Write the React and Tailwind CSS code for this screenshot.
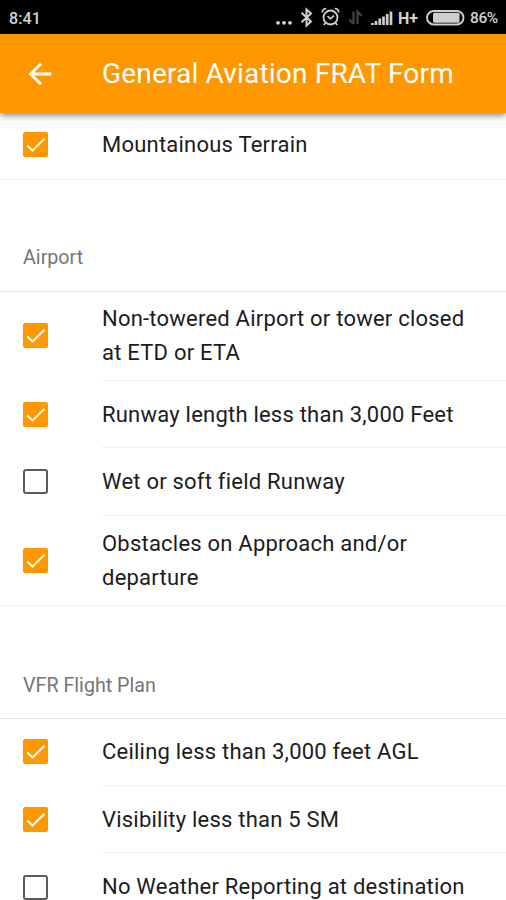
import React, { useState } from 'react';

const sections = [
  {
    id: 'terrain',
    rows: [
      { id: 'mountain', label: 'Mountainous Terrain', checked: true, size: 'h-[66px] pb-[2px]', box: 'pb-[3px]' },
    ],
  },
  {
    id: 'airport',
    title: 'Airport',
    rows: [
      { id: 'tower', label: 'Non-towered Airport or tower closed at ETD or ETA', checked: true, size: 'h-[88px]', box: 'pb-[2px]' },
      { id: 'length', label: 'Runway length less than 3,000 Feet', checked: true, size: 'h-[66px] pt-px', box: '' },
      { id: 'wet', label: 'Wet or soft field Runway', checked: false, size: 'h-[67px] pt-px', box: 'pb-px' },
      { id: 'obstacles', label: 'Obstacles on Approach and/or departure', checked: true, size: 'h-[89px] pt-px', box: 'pb-px' },
    ],
  },
  {
    id: 'vfr',
    title: 'VFR Flight Plan',
    rows: [
      { id: 'ceiling', label: 'Ceiling less than 3,000 feet AGL', checked: true, size: 'h-[66px]', box: 'pb-[2px]' },
      { id: 'visibility', label: 'Visibility less than 5 SM', checked: true, size: 'h-[66px] pt-px', box: '' },
      { id: 'weather', label: 'No Weather Reporting at destination', checked: false, size: 'h-[67px]', box: 'pt-px' },
    ],
  },
];

function StatusBar() {
  return (
    <div className="flex h-[34px] shrink-0 items-center bg-black pl-[9px] pr-[8px] pt-[2px] text-[#d4d4d4]">
      <span className="w-[60px] pt-[2px] text-[16px] font-medium leading-none tracking-[0.1px]">8:41</span>
      <svg width="200" height="32" viewBox="0 0 200 32" className="ml-auto block" fill="none" stroke="#cfcfcf">
        <g fill="#d4d4d4" stroke="none">
          <circle cx="8" cy="20.8" r="1.9" />
          <circle cx="14" cy="20.8" r="1.9" />
          <circle cx="20" cy="20.8" r="1.9" />
        </g>
        <path d="M31.5 10.8 L41 19.5 L36.5 23.5 V7.5 L41 11.5 L31.5 20.2" strokeWidth="2" />
        <circle cx="60.5" cy="15.5" r="7" strokeWidth="1.8" />
        <path d="M57.5 14 l3 2.8 l3.5 -3.3 M52.3 10.5 a4 4 0 0 1 4 -4 M68.7 10.5 a4 4 0 0 0 -4 -4 M55.5 21 l-1.8 2 M65.5 21 l1.8 2" strokeWidth="1.7" />
        <path d="M83.5 9.5 V22 M79.3 17.5 L83.5 22 M87.5 22 V9.5 L91.7 14" stroke="#444" strokeWidth="2.2" />
        <path d="M102.5 23 v-2 M106 23 v-4 M109.8 23 v-6.5 M113.5 23 v-8.5 M117.2 23 v-11 M121 23 v-13.5" strokeWidth="2.7" />
        <rect x="157" y="9" width="36.5" height="13.5" rx="6.7" strokeWidth="1.9" />
        <rect x="163" y="10.8" width="26.5" height="9.9" rx="1.5" fill="#cfcfcf" stroke="none" />
        <text x="128" y="21.5" fill="#d4d4d4" stroke="none" fontSize="16" fontWeight="700" textLength="20" lengthAdjust="spacingAndGlyphs">H+</text>
      </svg>
      <span className="w-[28px] whitespace-nowrap pt-[2px] text-[15.5px] font-medium leading-none tracking-[-0.4px]">86%</span>
    </div>
  );
}

function Checkbox({ checked, onChange }) {
  return (
    <button
      type="button"
      role="checkbox"
      aria-checked={checked}
      onClick={onChange}
      className={
        checked
          ? 'ml-[23px] h-[25px] w-[25px] shrink-0 rounded-[2px] bg-[#ff9800]'
          : 'ml-[23px] h-[25px] w-[25px] shrink-0 rounded-[3px] border-2 border-[#5c5c5c] bg-white'
      }
    >
      {checked && (
        <svg viewBox="0 0 25 25" className="block h-full w-full" fill="none" stroke="#fff6e8" strokeWidth="2.2">
          <path d="M4.2 13.4 L9.5 18.5 L21.5 6.8" />
        </svg>
      )}
    </button>
  );
}

function Row({ row, last, checked, onToggle }) {
  return (
    <li className={last ? 'flex items-stretch border-b border-[#f1f1f1]' : 'flex items-stretch'}>
      <div className={`${row.box} flex w-[102px] shrink-0 items-center`}>
        <Checkbox checked={checked} onChange={onToggle} />
      </div>
      <div className={last ? 'flex-1' : 'flex-1 border-b border-[#efefef]'}>
        <div className={`${row.size} flex items-center pr-[30px]`}>
          <span className="text-[22px] leading-[34px] tracking-[0.22px] text-[#1c1c1c]">{row.label}</span>
        </div>
      </div>
    </li>
  );
}

export default function App() {
  const [marked, setMarked] = useState(() =>
    Object.fromEntries(sections.flatMap(s => s.rows).map(r => [r.id, r.checked]))
  );

  return (
    <div className="flex h-[900px] w-[506px] flex-col overflow-hidden bg-white font-['Roboto',sans-serif]">
      <StatusBar />
      <header className="relative z-10 flex h-[79px] shrink-0 items-center bg-[#ff9800] text-white shadow-[0_3px_6px_rgba(0,0,0,0.42)]">
        <button type="button" aria-label="Back" className="ml-[23px] w-[79px]">
          <svg width="34" height="34" viewBox="0 0 24 24" fill="currentColor">
            <path d="M20 11H7.83l5.59-5.59L12 4l-8 8 8 8 1.41-1.41L7.83 13H20v-2z" />
          </svg>
        </button>
        <h1 className="whitespace-nowrap text-[28px] leading-none tracking-[0.18px]">General Aviation FRAT Form</h1>
      </header>

      <main className="flex-1 overflow-hidden">
        {sections.map(s => (
          <section key={s.id}>
            {s.title && (
              <h2
                className={
                  s.id === 'vfr'
                    ? 'flex h-[113px] items-end border-b border-[#e9e9e9] pb-[17px] pl-[23px] text-[19.7px] leading-[30px] text-[#757575]'
                    : 'flex h-[112px] items-end border-b border-[#e9e9e9] pb-[18px] pl-[23px] text-[19.7px] leading-[30px] text-[#757575]'
                }
              >
                {s.title}
              </h2>
            )}
            <ul>
              {s.rows.map((r, i) => (
                <Row
                  key={r.id}
                  row={r}
                  last={i === s.rows.length - 1}
                  checked={marked[r.id]}
                  onToggle={() => setMarked({ ...marked, [r.id]: !marked[r.id] })}
                />
              ))}
            </ul>
          </section>
        ))}
      </main>
    </div>
  );
}
